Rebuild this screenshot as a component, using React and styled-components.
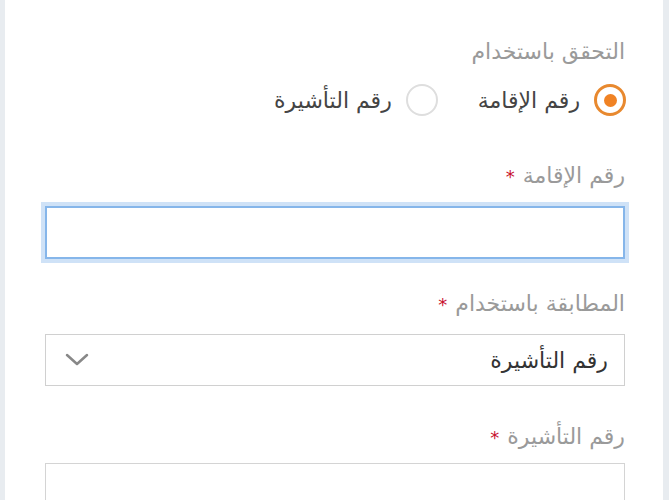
import React, { useState } from "react";
import styled, { createGlobalStyle } from "styled-components";

const GlobalStyle = createGlobalStyle`
  html, body {
    margin: 0;
    padding: 0;
    background: #e8ecf0;
  }
  body {
    font-family: "DejaVu Sans", "Noto Sans", sans-serif;
  }
`;

const Page = styled.div`
  margin: 0 6px 0 5px;
  height: 500px;
  overflow: hidden;
  background: #ffffff;
  direction: rtl;
  padding: 36px 38px 0 40px;
  box-sizing: border-box;
`;

const Field = styled.div`
  display: flex;
  flex-direction: column;
  margin-bottom: ${(p) => p.$gap || 30}px;
`;

const Label = styled.div`
  color: #9a9a9a;
  font-size: 22px;
  line-height: 32px;
  margin-bottom: ${(p) => p.$mb || 10}px;
`;

const Star = styled.span`
  color: #c8102e;
  font-size: 18px;
  margin-right: 8px;
`;

const RadioRow = styled.div`
  display: flex;
  align-items: center;
  height: 32px;
  gap: 18px;
  margin-right: -1px;
`;

const RadioOption = styled.label`
  display: flex;
  align-items: center;
  gap: 14px;
  color: #444;
  font-size: 22px;
  cursor: pointer;
  margin-left: 22px;
`;

const Circle = styled.span`
  width: 32px;
  height: 32px;
  box-sizing: border-box;
  border-radius: 50%;
  border: ${(p) => (p.$checked ? "3px solid #e8892f" : "2px solid #dedede")};
  display: flex;
  align-items: center;
  justify-content: center;
  &::after {
    content: "";
    display: ${(p) => (p.$checked ? "block" : "none")};
    width: 13px;
    height: 13px;
    border-radius: 50%;
    background: #f08224;
  }
`;

const TextInput = styled.input`
  height: ${(p) => (p.$focused ? 53 : 52)}px;
  box-sizing: border-box;
  border: ${(p) => (p.$focused ? "2px solid #86b6ea" : "1px solid #d4d4d4")};
  box-shadow: ${(p) => (p.$focused ? "0 0 0 4px #cfe2f7" : "none")};
  outline: none;
  font-family: inherit;
  font-size: 20px;
  padding: 0 14px;
  background: #fff;
`;

const Select = styled.div`
  height: 52px;
  box-sizing: border-box;
  border: 1px solid #d0d0d0;
  display: flex;
  align-items: center;
  justify-content: space-between;
  padding: 0 16px 0 18px;
  color: #333;
  font-size: 22px;
`;

export default function App() {
  const [mode, setMode] = useState("iqama");
  return (
    <>
      <GlobalStyle />
      <Page>
        <Field $gap={44}>
          <Label $mb={16}>التحقق باستخدام</Label>
          <RadioRow>
            <RadioOption onClick={() => setMode("iqama")}>
              <Circle $checked={mode === "iqama"} />
              رقم الإقامة
            </RadioOption>
            <RadioOption onClick={() => setMode("visa")}>
              <Circle $checked={mode === "visa"} />
              رقم التأشيرة
            </RadioOption>
          </RadioRow>
        </Field>
        <Field $gap={29}>
          <Label $mb={13}>
            رقم الإقامة<Star>*</Star>
          </Label>
          <TextInput $focused />
        </Field>
        <Field $gap={35}>
          <Label $mb={13}>
            المطابقة باستخدام<Star>*</Star>
          </Label>
          <Select>
            <span>رقم التأشيرة</span>
            <svg width="26" height="16" viewBox="0 0 26 16" fill="none">
              <path d="M3 3l10 9 10-9" stroke="#888" strokeWidth="2.5" strokeLinecap="round" strokeLinejoin="round" />
            </svg>
          </Select>
        </Field>
        <Field>
          <Label $mb={9}>
            رقم التأشيرة<Star>*</Star>
          </Label>
          <TextInput />
        </Field>
      </Page>
    </>
  );
}
